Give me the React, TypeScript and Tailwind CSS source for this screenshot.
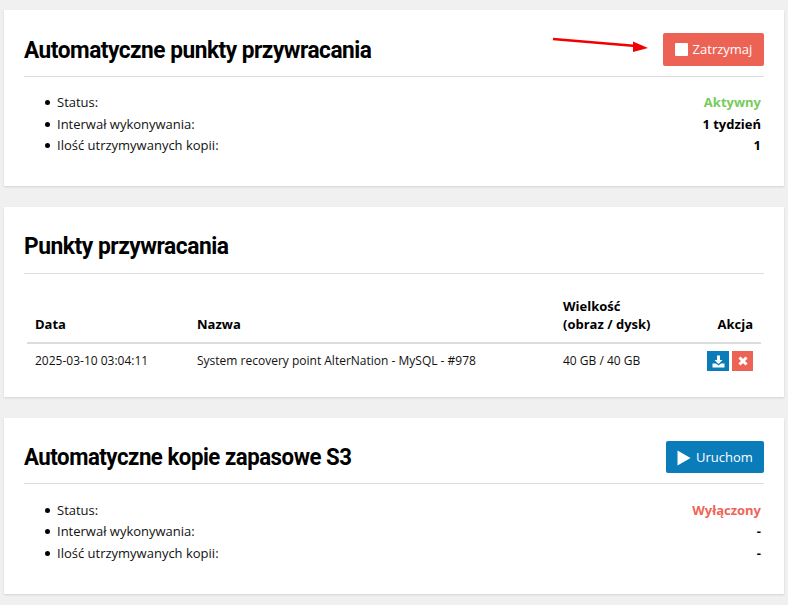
const body = "font-['Open_Sans',sans-serif] text-[13px] text-[#111]";
const title = "font-['Roboto',sans-serif] font-bold text-[24px] leading-none text-black tracking-[-0.5px] origin-left whitespace-nowrap";

function InfoList({ rows, top }: { rows: { label: string; value: string; color?: string }[]; top: string }) {
  return (
    <ul className={"pl-[21px] pr-[3px] flex flex-col " + top}>
      {rows.map((r) => (
        <li key={r.label} className="flex justify-between h-[21.5px] leading-[21.5px] items-center">
          <span className="flex items-center">
            <span className="w-[5px] h-[5px] rounded-full bg-black mr-[7px]" />
            {r.label}
          </span>
          <span className={"font-bold " + (r.color ?? "text-black")}>{r.value}</span>
        </li>
      ))}
    </ul>
  );
}

export default function App() {
  return (
    <div className={"w-[788px] h-[605px] overflow-hidden bg-[#f0f0f0] pt-[10px] px-[4px] relative " + body}>
      <section className="bg-white h-[176px] px-[20px] shadow-[0_1px_2px_rgba(0,0,0,0.12)]">
        <div className="h-[67px] border-b border-[#dcdcdc] flex items-end justify-between pb-[10px]">
          <h2 className={title + " scale-x-[0.943] mb-[4px]"}>Automatyczne punkty przywracania</h2>
          <button className="w-[101px] h-[33px] bg-[#ec6355] rounded-[2px] text-white flex items-center justify-center gap-[5px]">
            <span className="w-[13px] h-[13px] bg-white rounded-[1px]" />
            <span>Zatrzymaj</span>
          </button>
        </div>
        <InfoList
          top="pt-[15px]"
          rows={[
            { label: "Status:", value: "Aktywny", color: "text-[#78cb5c]" },
            { label: "Interwał wykonywania:", value: "1 tydzień" },
            { label: "Ilość utrzymywanych kopii:", value: "1" },
          ]}
        />
      </section>

      <section className="bg-white h-[190px] mt-[21px] px-[20px] shadow-[0_1px_2px_rgba(0,0,0,0.12)]">
        <div className="h-[67px] border-b border-[#dcdcdc] flex items-end pb-[15px]">
          <h2 className={title + " scale-x-[0.95]"}>Punkty przywracania</h2>
        </div>
        <table className="ml-[3px] w-[734px] mt-[23px] table-fixed border-collapse">
          <thead>
            <tr className="border-b-2 border-[#dcdcdc] font-bold text-black align-bottom">
              <th className="w-[170px] text-left pl-[8px] pb-[8px] font-bold">Data</th>
              <th className="w-[366px] text-left pb-[8px] font-bold">Nazwa</th>
              <th className="text-left pb-[9px] leading-[18px] font-bold">
                Wielkość
                <br />
                (obraz / dysk)
              </th>
              <th className="w-[90px] text-right pr-[8px] pb-[8px] font-bold">Akcja</th>
            </tr>
          </thead>
          <tbody>
            <tr className="text-[12px]">
              <td className="pl-[8px] pt-[7px]">2025-03-10 03:04:11</td>
              <td className="pt-[7px]">System recovery point AlterNation - MySQL - #978</td>
              <td className="pt-[7px]">40 GB / 40 GB</td>
              <td className="pr-[8px] pt-[7px]">
                <div className="flex justify-end gap-[3px]">
                  <span className="w-[22px] h-[20px] bg-[#0a7cba] flex items-center justify-center">
                    <svg width="13" height="13" viewBox="0 0 13 13" fill="white">
                      <path d="M5 0.5h3v4.5h2.5L6.5 9 2.5 5H5z" />
                      <path d="M0.5 8.5h3.5l2.5 2 2.5-2h3.5v4h-12z" />
                    </svg>
                  </span>
                  <span className="w-[21px] h-[20px] bg-[#ec6355] flex items-center justify-center">
                    <svg width="10" height="10" viewBox="0 0 10 10" stroke="white" strokeWidth="3">
                      <path d="M1.5 1.5l7 7M8.5 1.5l-7 7" />
                    </svg>
                  </span>
                </div>
              </td>
            </tr>
          </tbody>
        </table>
      </section>

      <section className="bg-white h-[176px] mt-[21px] px-[20px] shadow-[0_1px_2px_rgba(0,0,0,0.12)]">
        <div className="h-[66px] border-b border-[#dcdcdc] flex items-end justify-between pb-[10px]">
          <h2 className={title + " scale-x-[0.925] mb-[4px]"}>Automatyczne kopie zapasowe S3</h2>
          <button className="w-[98px] h-[32px] bg-[#0a7cba] rounded-[2px] text-white flex items-center justify-center gap-[5px] pt-[1px]">
            <svg width="14" height="16" viewBox="0 0 14 16" fill="white">
              <path d="M0.5 0.5L13.5 8 0.5 15.5z" />
            </svg>
            <span>Uruchom</span>
          </button>
        </div>
        <InfoList
          top="pt-[15.5px]"
          rows={[
            { label: "Status:", value: "Wyłączony", color: "text-[#ee6557]" },
            { label: "Interwał wykonywania:", value: "-" },
            { label: "Ilość utrzymywanych kopii:", value: "-" },
          ]}
        />
      </section>

      <svg className="absolute left-[550px] top-[34px]" width="102" height="20" viewBox="0 0 102 20">
        <line x1="3" y1="5" x2="86" y2="12" stroke="#f00000" strokeWidth="2.5" />
        <polygon points="98,14 83,7.5 83,18" fill="#f00000" />
      </svg>
    </div>
  );
}
